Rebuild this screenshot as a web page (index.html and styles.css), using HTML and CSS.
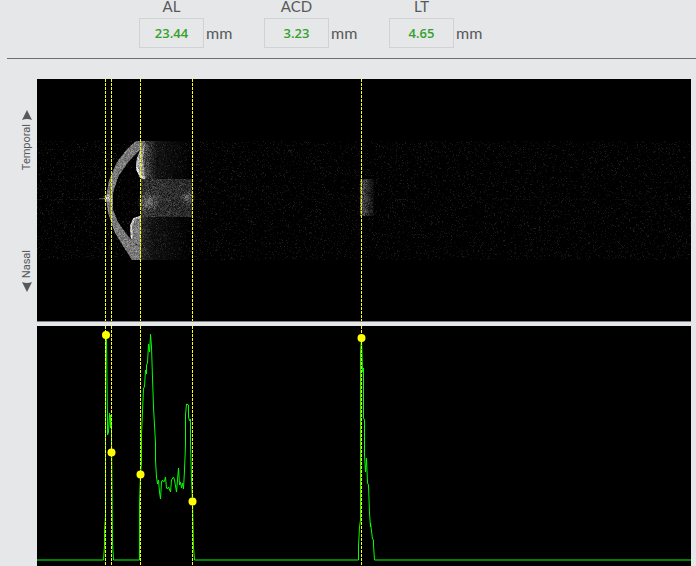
FILE: index.html
```
<!DOCTYPE html>
<html lang="en">
<head>
    <meta charset="UTF-8">
    <meta name="viewport" content="width=device-width, initial-scale=1.0">
    <title>Axial Length Scan</title>
    <link rel="stylesheet" href="styles.css">
</head>
<body>

    <header class="measures">
        <div class="measure">
            <label for="al">AL</label>
            <input id="al" type="text" value="23.44" readonly>
            <span class="unit">mm</span>
        </div>
        <div class="measure">
            <label for="acd">ACD</label>
            <input id="acd" type="text" value="3.23" readonly>
            <span class="unit">mm</span>
        </div>
        <div class="measure">
            <label for="lt">LT</label>
            <input id="lt" type="text" value="4.65" readonly>
            <span class="unit">mm</span>
        </div>
    </header>

    <main class="viewer">
        <div class="axis">
            <div class="direction">
                <svg class="arrow" viewBox="0 0 10 10"><path d="M5 0 L10 10 Q5 8 0 10 Z"/></svg>
                <span>Temporal</span>
            </div>
            <div class="direction">
                <span>Nasal</span>
                <svg class="arrow" viewBox="0 0 10 10"><path d="M5 10 L10 0 Q5 2 0 0 Z"/></svg>
            </div>
        </div>

        <div class="panels">
            <div class="scan">
                <canvas id="scanCanvas" width="654" height="242"></canvas>
                <svg class="markers" viewBox="0 0 654 242">
                    <path class="cursor" d="M68.5 0V242M74.5 0V242M103.5 0V242M155.5 0V242M324.5 0V242"/>
                </svg>
            </div>

            <svg class="chart" viewBox="0 0 654 240">
                <polyline class="trace" transform="translate(0.5 0)" points="-1,234 66,234 67,220 67,205 68,190 68,9 69,14 70,96 70,109 71,106 72,87 73,102 73,89 74,99 74,111 75,217 76,234
                    102,234 102,177 103,148 104,137 104,109 106,62 107,61 108,44 109,48 109,39 110,37 111,18 112,26 113,11 113,8 114,21 115,52 116,81 117,99 118,117
                    118,134 119,151 120,158 121,154 122,166 123,173 124,156 125,154 126,156 127,155 128,151 129,162 130,163 131,161 133,166 134,154 136,151 137,154
                    139,166 141,142 142,159 143,156 144,162 145,157 146,163 147,144 148,119 148,89 149,78 151,79 151,91 152,95 153,93 153,117 154,154 155,175 156,221 157,234
                    321,234 321,220 322,201 323,194 323,26 324,12 325,46 326,42 326,92 327,94 327,129 328,146 329,132 330,157 331,159 332,187 333,201 333,197 335,213 336,214 336,219 337,234 654,234"/>
                <path class="cursor" d="M68.5 0V240M74.5 0V240M103.5 0V240M155.5 0V240M324.5 0V240"/>
                <g class="peaks">
                    <circle cx="69" cy="9" r="4"/>
                    <circle cx="74.5" cy="126.5" r="4"/>
                    <circle cx="103.5" cy="148.5" r="4"/>
                    <circle cx="155.5" cy="175.5" r="4"/>
                    <circle cx="324.5" cy="12" r="4"/>
                </g>
            </svg>
        </div>
    </main>

    <script src="scan.js"></script>
</body>
</html>
```

FILE: styles.css
```
/* General */
* {
    box-sizing: border-box;
}

body {
    margin: 0;
    background-color: #e6e7e8;
    color: #58595b;
    font-family: "Open Sans", "Noto Sans", sans-serif;
}

/* Measured values */
.measures {
    display: grid;
    grid-template-columns: repeat(3, 125px);
    margin-left: 7px;
    padding: 0 0 10px 132px;
    border-bottom: 1px solid #6d6e70;
}

.measure {
    display: grid;
    grid-template-columns: 65px auto;
    column-gap: 2px;
    align-items: center;
    font-family: Lato, sans-serif;
    font-size: 16px;
}

.measure label {
    grid-column: 1 / -1;
    width: 65px;
    height: 18px;
    font-size: 15px;
    line-height: 13px;
    text-align: center;
}

.measure input {
    width: 65px;
    height: 30px;
    padding: 0;
    border: 1px solid #d1d2d4;
    background: #e6e7e8;
    color: #35a02c;
    font-family: "Open Sans", sans-serif;
    font-size: 13px;
    font-weight: 600;
    text-align: center;
}

.unit {
    padding-bottom: 2px;
}

/* Scan and chart */
.viewer {
    display: flex;
    padding: 20px 5px 0 0;
}

.axis {
    display: flex;
    flex-direction: column;
    flex: none;
    gap: 80px;
    width: 37px;
    padding: 31px 4px 0 0;
    align-items: flex-end;
}

.direction {
    display: flex;
    flex-direction: column;
    align-items: center;
    gap: 4px;
}

.direction span {
    writing-mode: vertical-rl;
    transform: rotate(180deg);
    font-family: Roboto, sans-serif;
    font-size: 11px;
    line-height: 12px;
}

.arrow {
    width: 10px;
    height: 10px;
    fill: #58595b;
}

.panels {
    flex: 1;
    min-width: 0;
}

.scan {
    position: relative;
    margin-bottom: 4px;
    border-bottom: 1px solid #808285;
    background: #000;
}

.scan canvas,
.chart {
    display: block;
    width: 100%;
}

.chart {
    background: #000;
}

.markers {
    position: absolute;
    top: 0;
    left: 0;
    width: 100%;
    height: 100%;
}

.cursor {
    fill: none;
    stroke: #ffff00;
    stroke-width: 1;
    stroke-dasharray: 3 1;
}

.trace {
    fill: none;
    stroke: #00ff00;
    stroke-width: 1;
}

.peaks {
    fill: #ffff00;
}
```

FILE: scan.js
```
const canvas = document.getElementById("scanCanvas");
const ctx = canvas.getContext("2d");
const W = canvas.width;
const H = canvas.height;

// seeded so that the speckle is the same on every load
let seed = 7;
function random() {
    seed = (seed * 1664525 + 1013904223) % 4294967296;
    return seed / 4294967296;
}

function shape(points, grey) {
    ctx.fillStyle = `rgb(${grey},${grey},${grey})`;
    ctx.beginPath();
    points.forEach(([x, y]) => ctx.lineTo(x, y));
    ctx.closePath();
    ctx.fill();
}

function fade(x, y, w, h, from, to) {
    const g = ctx.createLinearGradient(x, 0, x + w, 0);
    g.addColorStop(0, `rgb(${from},${from},${from})`);
    g.addColorStop(1, `rgb(${to},${to},${to})`);
    ctx.fillStyle = g;
    ctx.fillRect(x, y, w, h);
}

function glow(x, y, r, alpha) {
    const g = ctx.createRadialGradient(x, y, 0, x, y, r);
    g.addColorStop(0, `rgba(255,255,255,${alpha})`);
    g.addColorStop(1, "rgba(255,255,255,0)");
    ctx.fillStyle = g;
    ctx.fillRect(x - r, y - r, r * 2, r * 2);
}

ctx.fillStyle = "#000";
ctx.fillRect(0, 0, W, H);

// tissue behind the iris
fade(104, 62, 16, 38, 85, 18);
fade(120, 62, 34, 38, 18, 0);
fade(104, 138, 12, 43, 42, 16);
fade(116, 138, 38, 43, 16, 0);

// lens
fade(104, 100, 51, 38, 48, 40);
glow(111, 123, 12, 0.3);
glow(151, 118, 8, 0.3);

// cornea
shape([
    [99, 62], [90, 70], [80, 83], [72, 101], [69, 119], [71, 134], [78, 154], [86, 167], [95, 181],
    [104, 181], [104, 165], [99, 166], [91, 157], [81, 143], [76, 131], [76, 114], [81, 98], [92, 82], [104, 70], [108, 62]
], 118);
glow(71, 119, 5, 0.6);

// iris, with a brighter rim
shape([[104, 69], [101, 76], [99, 84], [100, 92], [103, 99], [108, 100], [107, 90], [106, 80], [108, 65]], 155);
shape([[104, 137], [97, 139], [93, 147], [94, 160], [98, 165], [104, 166]], 120);
ctx.strokeStyle = "#c8c8c8";
ctx.lineWidth = 2;
ctx.beginPath();
ctx.moveTo(101, 78);
ctx.lineTo(100, 90);
ctx.lineTo(104, 98);
ctx.lineTo(108, 99);
ctx.moveTo(103, 138);
ctx.lineTo(97, 140);
ctx.lineTo(94, 147);
ctx.lineTo(95, 160);
ctx.stroke();

// retina
fade(323, 100, 14, 37, 80, 8);

// speckle inside the scanned band
const image = ctx.getImageData(0, 0, W, H);
for (let y = 62; y < 181; y++) {
    for (let x = 0; x < W; x++) {
        const i = (y * W + x) * 4;
        const base = image.data[i];
        const spread = base > 90 ? 0.5 : 1.1;
        let v = base * (1 - spread / 2 + random() * spread);
        v += Math.pow(random(), 12) * 34;
        if (y === 120 && random() < 0.5) {
            v += x < 70 ? 18 : 6;
        }
        if (y === 119 && x > 61 && x < 70) {
            v += 70;
        }
        image.data[i] = image.data[i + 1] = image.data[i + 2] = v;
    }
}
ctx.putImageData(image, 0, 0);
```
